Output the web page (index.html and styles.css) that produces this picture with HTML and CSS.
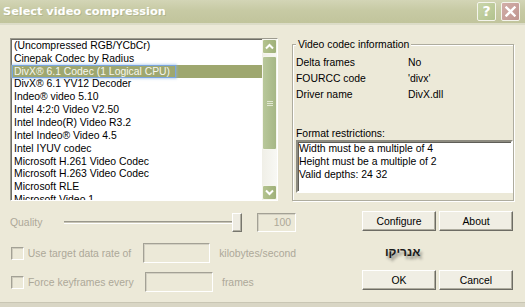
FILE: index.html
```html
<!DOCTYPE html>
<html>
<head>
<meta charset="utf-8">
<title>Select video compression</title>
<link rel="stylesheet" href="styles.css">
</head>
<body>
<div class="window">
  <div class="titlebar">
    <span class="title">Select video compression</span>
    <div class="tbtns">
      <div class="tbtn help">?</div>
      <div class="tbtn close">
        <svg width="11" height="11" viewBox="0 0 11 11"><path d="M1.5 1.5 L9.5 9.5 M9.5 1.5 L1.5 9.5" stroke="#fff" stroke-width="2.4" stroke-linecap="square"/></svg>
      </div>
    </div>
  </div>
  <div class="client">
    <div class="top">
      <div class="listbox">
        <div class="items">
          <div class="item"><span class="it">(Uncompressed RGB/YCbCr)</span></div>
          <div class="item"><span class="it">Cinepak Codec by Radius</span></div>
          <div class="item sel"><span class="it">DivX® 6.1 Codec (1 Logical CPU)</span></div>
          <div class="item"><span class="it">DivX® 6.1 YV12 Decoder</span></div>
          <div class="item"><span class="it">Indeo® video 5.10</span></div>
          <div class="item"><span class="it">Intel 4:2:0 Video V2.50</span></div>
          <div class="item"><span class="it">Intel Indeo(R) Video R3.2</span></div>
          <div class="item"><span class="it">Intel Indeo® Video 4.5</span></div>
          <div class="item"><span class="it">Intel IYUV codec</span></div>
          <div class="item"><span class="it">Microsoft H.261 Video Codec</span></div>
          <div class="item"><span class="it">Microsoft H.263 Video Codec</span></div>
          <div class="item"><span class="it">Microsoft RLE</span></div>
          <div class="item"><span class="it">Microsoft Video 1</span></div>
        </div>
        <div class="vscroll">
          <div class="sbtn">
            <svg width="9" height="7" viewBox="0 0 9 7"><path d="M1 5.5 L4.5 2 L8 5.5" fill="none" stroke="#fff" stroke-width="2"/></svg>
          </div>
          <div class="track">
            <div class="thumb">
              <div class="grip"><i></i><i></i><i></i></div>
            </div>
          </div>
          <div class="sbtn">
            <svg width="9" height="7" viewBox="0 0 9 7"><path d="M1 1.5 L4.5 5 L8 1.5" fill="none" stroke="#fff" stroke-width="2"/></svg>
          </div>
        </div>
      </div>
      <fieldset class="group">
        <legend>Video codec information</legend>
        <div class="info">
          <span>Delta frames</span><span>No</span>
          <span>FOURCC code</span><span>'divx'</span>
          <span>Driver name</span><span>DivX.dll</span>
        </div>
        <div class="fr-label">Format restrictions:</div>
        <div class="restr">Width must be a multiple of 4<br>Height must be a multiple of 2<br>Valid depths: 24 32</div>
      </fieldset>
    </div>
    <div class="bottom">
      <div class="controls">
        <div class="qrow">
          <span class="dis quality">Quality</span>
          <div class="slider"><div class="sline"></div><div class="sthumb"></div></div>
          <div class="edit num">100</div>
        </div>
        <div class="crow r2">
          <span class="chk"></span>
          <span class="dis clbl">Use target data rate of</span>
          <div class="edit cedit"></div>
          <span class="dis after">kilobytes/second</span>
        </div>
        <div class="crow r3">
          <span class="chk"></span>
          <span class="dis clbl">Force keyframes every</span>
          <div class="edit cedit"></div>
          <span class="dis after">frames</span>
        </div>
      </div>
      <div class="buttons">
        <div class="brow"><button class="btn">Configure</button><button class="btn">About</button></div>
        <div class="sig"><span dir="rtl">אנריקו</span></div>
        <div class="brow"><button class="btn">OK</button><button class="btn">Cancel</button></div>
      </div>
    </div>
  </div>
  <div class="frame"></div>
</div>
</body>
</html>
```

FILE: styles.css
```css
* { box-sizing: border-box; }
html, body { margin: 0; padding: 0; }
body {
  width: 525px;
  height: 307px;
  overflow: hidden;
  background: #ece9d8;
  font-family: "Liberation Sans", Arial, sans-serif;
  font-size: 10.4px;
  color: #000;
}
.window {
  width: 525px;
  height: 307px;
  display: flex;
  flex-direction: column;
  background: #ece9d8;
}

/* title bar */
.titlebar {
  height: 25px;
  flex: none;
  display: flex;
  align-items: center;
  justify-content: space-between;
  padding: 0 5px 0 3px;
  background: linear-gradient(#d3d5b6, #c7caa4 45%, #c1c49c);
  border-bottom: 2px solid #dcdcc8;
}
.title {
  font-family: "DejaVu Sans", sans-serif;
  font-weight: bold;
  font-size: 11.3px;
  color: #fff;
  text-shadow: 1px 1px 0 rgba(120, 125, 90, 0.25);
}
.tbtns { display: flex; gap: 5px; margin-top: -1px; }
.tbtn {
  width: 19px;
  height: 19px;
  border: 1px solid #f4f4ec;
  border-radius: 2px;
  display: flex;
  align-items: center;
  justify-content: center;
}
.help {
  background: linear-gradient(135deg, #cad6ab, #b2c28d);
  color: #fff;
  font-family: "DejaVu Sans", sans-serif;
  font-weight: bold;
  font-size: 14px;
}
.close { background: linear-gradient(135deg, #d2aea8, #bf958f); }

/* client */
.client {
  height: 278px;
  flex: none;
  display: flex;
  flex-direction: column;
  border-bottom: 1px solid #c9c6b4;
}
.frame { flex: 1; background: #d9d6c5; }

.top {
  display: flex;
  align-items: flex-start;
  padding: 13px 0 0 10px;
  height: 176px;
  flex: none;
}

/* list box */
.listbox {
  width: 268px;
  height: 163px;
  display: flex;
  background: #fff;
  border: 1px solid;
  border-color: #9d9b8f #fff #fff #9d9b8f;
  box-shadow: inset 1px 1px 0 #6f6e67;
}
.items {
  flex: 1;
  overflow: hidden;
  padding-top: 0;
}
.item {
  height: 12.85px;
  display: flex;
  align-items: center;
  padding-left: 1px;
  white-space: nowrap;
}
.it {
  border: 1px solid transparent;
  padding: 0 5px 0 1px;
  line-height: 11px;
}
.item.sel { background: #9ea76f; color: #f6f6ee; }
.item.sel .it {
  border-color: #7aa5de;
  box-shadow: 0 0 2px 1px rgba(140, 180, 230, 0.55);
}

/* scrollbar */
.vscroll {
  width: 15px;
  display: flex;
  flex-direction: column;
  background: linear-gradient(90deg, #f0efe7, #f8f8f4);
}
.sbtn {
  height: 15px;
  flex: none;
  border: 1px solid #f6f6ee;
  border-radius: 2px;
  background: linear-gradient(90deg, #b4c38f, #9fb079);
  display: flex;
  align-items: center;
  justify-content: center;
}
.track {
  flex: 1;
  padding-top: 2px;
}
.thumb {
  height: 94px;
  border: 1px solid #f6f6ee;
  border-radius: 2px;
  background: linear-gradient(90deg, #b9c89b, #a6b785);
  display: flex;
  align-items: center;
  justify-content: center;
}
.grip { display: flex; flex-direction: column; gap: 1px; }
.grip i { display: block; width: 6px; height: 1px; background: #e2e8d2; }

/* group box */
.group {
  margin: 0 0 0 14px;
  width: 222px;
  height: 163px;
  min-width: 0;
  padding: 0 0 0 3px;
  border: 1px solid #aeac9e;
  box-shadow: inset 1px 1px 0 #fff, 1px 1px 0 #fff;
}
.group legend {
  padding: 0 2px;
  margin: 0;
  line-height: 13px;
  background: #ece9d8;
}
.info {
  display: grid;
  grid-template-columns: 112px 1fr;
  line-height: 16px;
  margin-top: 4px;
}
.fr-label {
  margin-top: 25px;
  line-height: 12px;
}
.restr {
  height: 53px;
  background: #fff;
  border: 2px solid;
  border-color: #8d8b80 #fff #fff #8d8b80;
  box-shadow: inset 1px 1px 0 #5f5e58;
  padding: 0 1px 0 1px;
  line-height: 13px;
}

/* bottom */
.bottom {
  display: flex;
  padding-left: 10px;
}
.controls {
  width: 286px;
  padding-top: 12px;
  display: flex;
  flex-direction: column;
}
.dis { color: #aca899; white-space: nowrap; }
.qrow {
  display: flex;
  align-items: center;
  height: 19px;
}
.quality { width: 54px; }
.slider {
  width: 178px;
  height: 19px;
  display: flex;
  align-items: center;
}
.sline {
  width: 176px;
  height: 3px;
  border-top: 1px solid #9a988c;
  border-bottom: 1px solid #fff;
  background: #c8c5b6;
}
.sthumb {
  width: 10px;
  height: 19px;
  margin-left: -8px;
  background: #eeece2;
  border: 1px solid;
  border-color: #fff #77766d #77766d #fff;
  box-shadow: inset -1px -1px 0 #b2b0a3;
}
.edit {
  border: 1px solid;
  border-color: #a3a195 #fff #fff #a3a195;
  box-shadow: inset 1px 1px 0 #d3d0c2;
  background: #ece9d8;
}
.num {
  margin-left: 15px;
  width: 39px;
  height: 19px;
  text-align: right;
  padding-right: 4px;
  line-height: 17px;
  color: #aca899;
}
.crow {
  display: flex;
  align-items: center;
  height: 20px;
}
.r2 { margin-top: 11px; }
.r3 { margin-top: 9px; }
.chk {
  width: 13px;
  height: 13px;
  margin-left: 1px;
  border: 1px solid;
  border-color: #a3a195 #fff #fff #a3a195;
  box-shadow: inset 1px 1px 0 #cfccbd;
  background: #ece9d8;
}
.clbl { margin-left: 4px; width: 117px; }
.cedit { width: 68px; height: 20px; }
.after { margin-left: 9px; }

.buttons {
  margin-left: 66px;
  padding-top: 10px;
  display: flex;
  flex-direction: column;
}
.brow { display: flex; gap: 3px; }
.btn {
  width: 74px;
  height: 20px;
  padding: 0;
  font-family: "Liberation Sans", Arial, sans-serif;
  font-size: 10.4px;
  color: #000;
  background: #f0eee4;
  border: 1px solid;
  border-color: #fff #6d6c64 #6d6c64 #fff;
  box-shadow: inset -1px -1px 0 #aeac9f;
  border-radius: 0;
}
.sig {
  height: 39px;
  padding: 15px 0 0 23px;
  line-height: 13px;
  font-family: "Liberation Sans", "DejaVu Sans", sans-serif;
  font-weight: bold;
  font-size: 12px;
  color: #1a1a1a;
  text-shadow: 2px 3px 3px rgba(0, 0, 0, 0.45);
}
```
